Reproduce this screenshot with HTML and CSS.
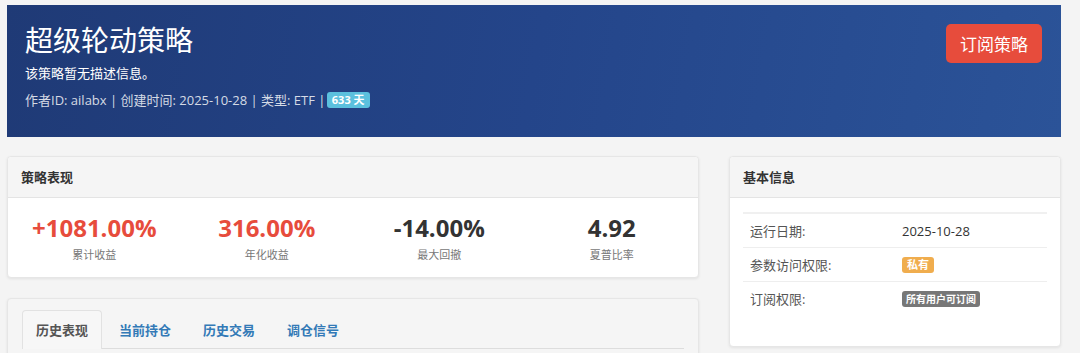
FILE: index.html
```html
<!DOCTYPE html>
<html lang="zh-CN">
<head>
  <meta charset="UTF-8" />
  <title>超级轮动策略</title>
  <link rel="stylesheet" href="styles.css">
</head>
<body>
  <div class="page">
    <div class="hero">
      <div class="hero-text">
        <h1>超级轮动策略</h1>
        <p class="desc">该策略暂无描述信息。</p>
        <p class="meta">作者ID: ailabx | 创建时间: 2025-10-28 | 类型: ETF | <span class="badge badge-info">633 天</span></p>
      </div>
      <button class="btn-subscribe">订阅策略</button>
    </div>

    <div class="row">
      <div class="col-main">
        <div class="panel">
          <div class="panel-heading">策略表现</div>
          <div class="stats">
            <div class="stat">
              <div class="stat-value red">+1081.00%</div>
              <div class="stat-label">累计收益</div>
            </div>
            <div class="stat">
              <div class="stat-value red">316.00%</div>
              <div class="stat-label">年化收益</div>
            </div>
            <div class="stat">
              <div class="stat-value">-14.00%</div>
              <div class="stat-label">最大回撤</div>
            </div>
            <div class="stat">
              <div class="stat-value">4.92</div>
              <div class="stat-label">夏普比率</div>
            </div>
          </div>
        </div>

        <div class="panel tabs-panel">
          <ul class="tabs">
            <li class="active">历史表现</li>
            <li>当前持仓</li>
            <li>历史交易</li>
            <li>调仓信号</li>
          </ul>
        </div>
      </div>

      <div class="col-side">
        <div class="panel side-panel">
          <div class="panel-heading">基本信息</div>
          <div class="panel-body">
            <table class="info">
              <tr>
                <td>运行日期:</td>
                <td class="val">2025-10-28</td>
              </tr>
              <tr>
                <td>参数访问权限:</td>
                <td><span class="badge badge-warn">私有</span></td>
              </tr>
              <tr>
                <td>订阅权限:</td>
                <td><span class="badge badge-grey">所有用户可订阅</span></td>
              </tr>
            </table>
          </div>
        </div>
      </div>
    </div>
  </div>
</body>
</html>
```

FILE: styles.css
```css
html, body {
  margin: 0;
  padding: 0;
  background: #f4f4f4;
  font-family: "Open Sans", "Noto Sans CJK SC", sans-serif;
  color: #333;
  overflow: hidden;
}

.page {
  padding: 5px 19px 0 7px;
}

.hero {
  display: flex;
  justify-content: space-between;
  align-items: flex-start;
  height: 132px;
  box-sizing: border-box;
  padding: 15px 19px 0 18px;
  background: linear-gradient(100deg, #1f3a76 0%, #24458a 50%, #2b5398 100%);
  color: #fff;
}

.hero h1 {
  margin: 0;
  font-size: 28px;
  font-weight: 400;
  line-height: 40px;
}

.hero .desc {
  margin: 3px 0 0;
  font-size: 13px;
  line-height: 20px;
}

.hero .meta {
  margin: 7px 0 0;
  font-size: 13px;
  line-height: 20px;
  color: rgba(255, 255, 255, 0.82);
}

.btn-subscribe {
  margin-top: 4px;
  width: 96px;
  height: 39px;
  border: none;
  border-radius: 5px;
  background: #e74c3c;
  color: #fff;
  font-family: inherit;
  font-size: 17px;
}

.badge {
  display: inline-block;
  padding: 0 5px;
  border-radius: 3px;
  font-size: 11px;
  font-weight: 700;
  line-height: 16px;
  color: #fff;
  vertical-align: 1px;
}

.badge-info { background: #5bc0de; margin-left: -2px; }
.badge-warn { background: #f0ad4e; }
.badge-grey { background: #777; font-size: 10px; padding: 0 4px; }

.row {
  display: flex;
  gap: 30px;
  margin-top: 19px;
}

.col-main {
  width: 692px;
  display: flex;
  flex-direction: column;
  gap: 20px;
}

.col-side {
  width: 332px;
}

.panel {
  background: #fff;
  border: 1px solid #e6e6e6;
  border-radius: 4px;
  box-shadow: 0 1px 3px rgba(0, 0, 0, 0.08);
}

.panel-heading {
  height: 40px;
  line-height: 40px;
  padding: 0 13px;
  background: #f5f5f5;
  border-bottom: 1px solid #e4e4e4;
  border-radius: 4px 4px 0 0;
  font-size: 13px;
  font-weight: 700;
}

.stats {
  display: flex;
  height: 79px;
}

.stat {
  flex: 1;
  text-align: center;
  padding-top: 15px;
}

.stat-value {
  font-size: 24px;
  font-weight: 700;
  line-height: 30px;
}

.stat-value.red {
  color: #e74c3c;
}

.stat-label {
  margin-top: 2px;
  font-size: 11px;
  line-height: 20px;
  color: #777;
}

.tabs-panel {
  background: #f5f5f5;
  padding: 11px 14px 0;
  height: 60px;
}

.tabs {
  display: flex;
  list-style: none;
  margin: 0;
  padding: 0;
  border-bottom: 1px solid #ddd;
}

.tabs li {
  padding: 0 14px 0 16px;
  height: 38px;
  line-height: 38px;
  font-size: 13px;
  font-weight: 700;
  color: #337ab7;
  border: 1px solid transparent;
  border-bottom: none;
  margin-bottom: -1px;
}

.tabs li.active {
  color: #555;
  background: #f7f7f7;
  border-color: #e2e2e2;
  border-radius: 4px 4px 0 0;
  padding: 0 13px;
}

.side-panel {
  height: 189px;
}

.panel-body {
  padding: 14px 13px;
}

.info {
  width: 100%;
  border-collapse: collapse;
  border-top: 2px solid #f0f0f0;
  font-size: 13px;
}

.info td {
  width: 50%;
  height: 33px;
  padding: 0 7px;
  border-bottom: 1px solid #eee;
  color: #555;
}

.info tr:last-child td {
  border-bottom: none;
}

.info td.val {
  color: #333;
}
```
